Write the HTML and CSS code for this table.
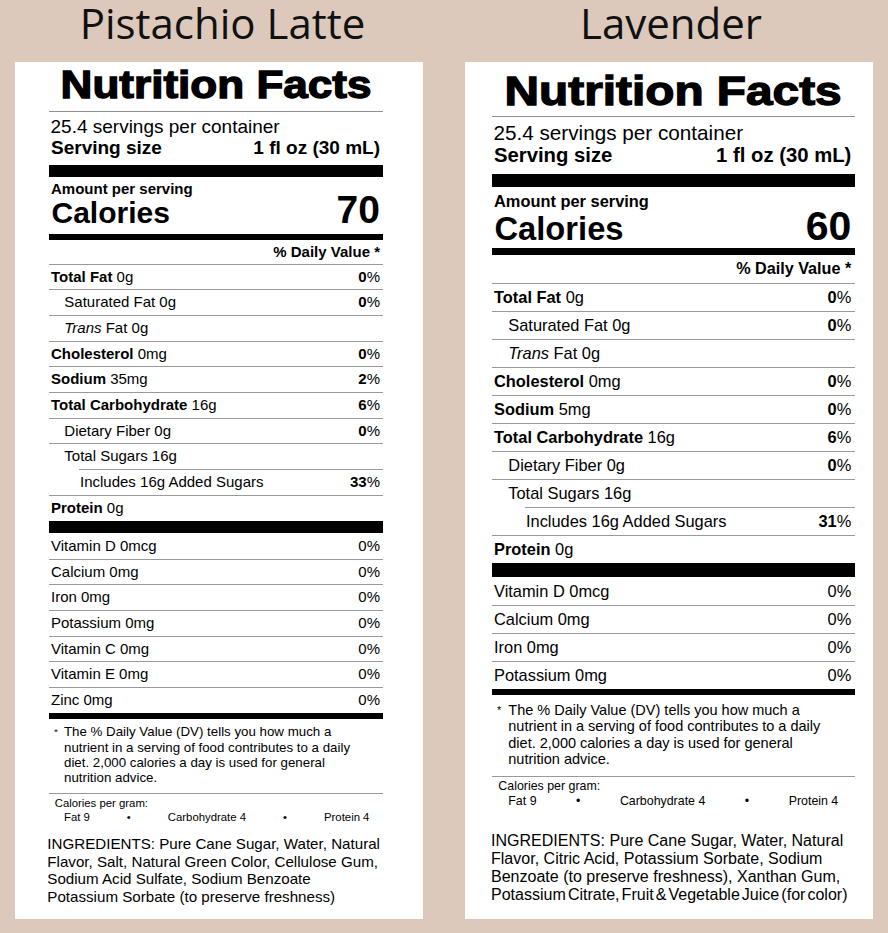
FILE: index.html
```html
<!DOCTYPE html>
<html lang="en">
<head>
<meta charset="utf-8">
<title>Nutrition Facts</title>
<link rel="stylesheet" href="styles.css">
</head>
<body>
<div class="page">
  <section class="col col-a">
    <h1 class="title title-a">Pistachio Latte</h1>
    <div class="panel">
      <div class="nf"><span>Nutrition Facts</span></div>
      <div class="servings">25.4 servings per container</div>
      <div class="ss"><b>Serving size</b><b>1 fl oz (30 mL)</b></div>
      <div class="bar bar1"></div>
      <div class="aps">Amount per serving</div>
      <div class="cal"><span class="calword">Calories</span><span class="calnum">70</span></div>
      <div class="bar bar2"></div>
      <div class="dvh">% Daily Value *</div>
      <div class="rows">
        <div class="row"><span><b>Total Fat</b> 0g</span><span><b>0</b>%</span></div>
        <div class="row"><span class="sub">Saturated Fat 0g</span><span><b>0</b>%</span></div>
        <div class="row"><span class="sub"><i>Trans</i> Fat 0g</span><span></span></div>
        <div class="row"><span><b>Cholesterol</b> 0mg</span><span><b>0</b>%</span></div>
        <div class="row"><span><b>Sodium</b> 35mg</span><span><b>2</b>%</span></div>
        <div class="row"><span><b>Total Carbohydrate</b> 16g</span><span><b>6</b>%</span></div>
        <div class="row"><span class="sub">Dietary Fiber 0g</span><span><b>0</b>%</span></div>
        <div class="row"><span class="sub">Total Sugars 16g</span><span></span></div>
        <div class="row subsub"><span>Includes 16g Added Sugars</span><span><b>33</b>%</span></div>
        <div class="row"><span><b>Protein</b> 0g</span><span></span></div>
      </div>
      <div class="bar bar3"></div>
      <div class="rows vit">
        <div class="row"><span>Vitamin D 0mcg</span><span>0%</span></div>
        <div class="row"><span>Calcium 0mg</span><span>0%</span></div>
        <div class="row"><span>Iron 0mg</span><span>0%</span></div>
        <div class="row"><span>Potassium 0mg</span><span>0%</span></div>
        <div class="row"><span>Vitamin C 0mg</span><span>0%</span></div>
        <div class="row"><span>Vitamin E 0mg</span><span>0%</span></div>
        <div class="row"><span>Zinc 0mg</span><span>0%</span></div>
      </div>
      <div class="bar bar4"></div>
      <div class="note"><span class="ast">*</span><span>The % Daily Value (DV) tells you how much a<br>nutrient in a serving of food contributes to a daily<br>diet. 2,000 calories a day is used for general<br>nutrition advice.</span></div>
      <div class="rule"></div>
      <div class="cpg">
        <div>Calories per gram:</div>
        <div class="cpg-items"><span>Fat 9</span><span>•</span><span>Carbohydrate 4</span><span>•</span><span>Protein 4</span></div>
      </div>
      <p class="ingr">INGREDIENTS: Pure Cane Sugar, Water, Natural<br>Flavor, Salt, Natural Green Color, Cellulose Gum,<br>Sodium Acid Sulfate, Sodium Benzoate<br>Potassium Sorbate (to preserve freshness)</p>
    </div>
  </section>

  <section class="col col-b">
    <h1 class="title title-b">Lavender</h1>
    <div class="panel">
      <div class="nf"><span>Nutrition Facts</span></div>
      <div class="servings">25.4 servings per container</div>
      <div class="ss"><b>Serving size</b><b>1 fl oz (30 mL)</b></div>
      <div class="bar bar1"></div>
      <div class="aps">Amount per serving</div>
      <div class="cal"><span class="calword">Calories</span><span class="calnum">60</span></div>
      <div class="bar bar2"></div>
      <div class="dvh">% Daily Value *</div>
      <div class="rows">
        <div class="row"><span><b>Total Fat</b> 0g</span><span><b>0</b>%</span></div>
        <div class="row"><span class="sub">Saturated Fat 0g</span><span><b>0</b>%</span></div>
        <div class="row"><span class="sub"><i>Trans</i> Fat 0g</span><span></span></div>
        <div class="row"><span><b>Cholesterol</b> 0mg</span><span><b>0</b>%</span></div>
        <div class="row"><span><b>Sodium</b> 5mg</span><span><b>0</b>%</span></div>
        <div class="row"><span><b>Total Carbohydrate</b> 16g</span><span><b>6</b>%</span></div>
        <div class="row"><span class="sub">Dietary Fiber 0g</span><span><b>0</b>%</span></div>
        <div class="row"><span class="sub">Total Sugars 16g</span><span></span></div>
        <div class="row subsub"><span>Includes 16g Added Sugars</span><span><b>31</b>%</span></div>
        <div class="row"><span><b>Protein</b> 0g</span><span></span></div>
      </div>
      <div class="bar bar3"></div>
      <div class="rows vit">
        <div class="row"><span>Vitamin D 0mcg</span><span>0%</span></div>
        <div class="row"><span>Calcium 0mg</span><span>0%</span></div>
        <div class="row"><span>Iron 0mg</span><span>0%</span></div>
        <div class="row"><span>Potassium 0mg</span><span>0%</span></div>
      </div>
      <div class="bar bar4"></div>
      <div class="note"><span class="ast">*</span><span>The % Daily Value (DV) tells you how much a<br>nutrient in a serving of food contributes to a daily<br>diet. 2,000 calories a day is used for general<br>nutrition advice.</span></div>
      <div class="rule"></div>
      <div class="cpg">
        <div>Calories per gram:</div>
        <div class="cpg-items"><span>Fat 9</span><span>•</span><span>Carbohydrate 4</span><span>•</span><span>Protein 4</span></div>
      </div>
      <p class="ingr">INGREDIENTS: Pure Cane Sugar, Water, Natural<br>Flavor, Citric Acid, Potassium Sorbate, Sodium<br>Benzoate (to preserve freshness), Xanthan Gum,<br><span class="tight">Potassium Citrate, Fruit &amp; Vegetable Juice (for color)</span></p>
    </div>
  </section>
</div>
</body>
</html>
```
FILE: styles.css
```css
* { box-sizing: border-box; }

html, body {
  margin: 0;
  padding: 0;
}

body {
  width: 888px;
  height: 933px;
  overflow: hidden;
  background: #ddc9bb;
  color: #000;
  font-family: "Liberation Sans", Arial, sans-serif;
}

.page {
  display: flex;
  gap: 42px;
  padding: 0 15px;
}

.col {
  width: 408px;
  flex: none;
}

/* per-label scale settings */
.col-a {
  --pad-l: 34px; --pad-r: 40px;
  --nf-size: 38px; --nf-lh: 40px; --nf-sx: 1.16; --nf-pt: 2.8px; --nf-pb: 6px;
  --sv-size: 19px; --sv-lh: 21px; --sv-mt: 3.8px;
  --ss-size: 19px; --ss-lh: 21px;
  --bar1-mt: 7px; --bar1-h: 12px;
  --aps-size: 15px; --aps-lh: 17px; --aps-mt: 3.7px;
  --cal-size: 30px; --calnum-size: 39px; --cal-lh: 26px; --cal-mt: 0px;
  --bar2-mt: 7.5px; --bar2-h: 6px;
  --dv-size: 15px; --dv-lh: 17px; --dv-pt: 3px; --dv-pb: 4px;
  --row-size: 15px; --row-lh: 24.67px; --ind1: 13.3px; --ind2: 30px;
  --bar3-h: 12.5px; --bar4-h: 6px;
  --note-size: 13.3px; --note-lh: 15.2px; --note-mt: 5.6px; --note-pl: 5px; --ast-w: 10px; --note-mb: 7.7px;
  --cpg-size: 11.35px; --cpg-lh: 14px; --cpg-mt: 2.1px; --cpg-pl: 5.7px; --cpg-pl2: 9.3px; --cpg-gap: 37px;
  --ing-size: 15.15px; --ing-lh: 17.6px; --ing-mt: 11.2px; --ing-ml: -1.7px;
  --ip-l: 2px; --ip-r: 3px;
}

.col-b {
  --pad-l: 27px; --pad-r: 18px;
  --nf-size: 40px; --nf-lh: 42px; --nf-sx: 1.194; --nf-pt: 8px; --nf-pb: 4px;
  --sv-size: 20.7px; --sv-lh: 23px; --sv-mt: 4.3px;
  --ss-size: 20.3px; --ss-lh: 23px;
  --bar1-mt: 6.7px; --bar1-h: 13.3px;
  --aps-size: 16.4px; --aps-lh: 18px; --aps-mt: 4.7px;
  --cal-size: 32.7px; --calnum-size: 41px; --cal-lh: 28px; --cal-mt: 1.8px;
  --bar2-mt: 5.6px; --bar2-h: 6.7px;
  --dv-size: 16.2px; --dv-lh: 18px; --dv-pt: 4.4px; --dv-pb: 5.3px;
  --row-size: 16.4px; --row-lh: 27px; --ind1: 14.3px; --ind2: 33px;
  --bar3-h: 14px; --bar4-h: 6px;
  --note-size: 14.5px; --note-lh: 16.5px; --note-mt: 7px; --note-pl: 5px; --ast-w: 11.3px; --note-mb: 8px;
  --cpg-size: 12.4px; --cpg-lh: 15px; --cpg-mt: 2.2px; --cpg-pl: 6.3px; --cpg-pl2: 10px; --cpg-gap: 39.5px;
  --ing-size: 16.05px; --ing-lh: 18px; --ing-mt: 22.5px; --ing-ml: -1px;
  --ip-l: 2px; --ip-r: 3.7px;
}

.title {
  margin: 0;
  padding-bottom: 16px;
  font-family: "Open Sans", "Noto Sans", sans-serif;
  font-weight: 400;
  font-size: 42px;
  line-height: 46px;
  text-align: center;
  color: #111;
}

.title-a { padding-left: 7px; }
.title-b { padding-left: 4px; }

.panel {
  height: 857px;
  background: #fff;
  padding: 0 var(--pad-r) 0 var(--pad-l);
}

.nf {
  padding: var(--nf-pt) 0 var(--nf-pb);
  border-bottom: 1px solid #8f8f8f;
  text-align: center;
  font-weight: 700;
  font-size: var(--nf-size);
  line-height: var(--nf-lh);
  white-space: nowrap;
}

.nf span {
  display: inline-block;
  transform: scaleX(var(--nf-sx));
  -webkit-text-stroke: 1.3px #000;
}

.servings {
  margin-top: var(--sv-mt);
  padding-left: 1.5px;
  font-size: var(--sv-size);
  line-height: var(--sv-lh);
  white-space: nowrap;
}

.ss {
  display: flex;
  justify-content: space-between;
  padding: 0 var(--ip-r) 0 var(--ip-l);
  font-size: var(--ss-size);
  line-height: var(--ss-lh);
  white-space: nowrap;
}

.bar { background: #000; }
.bar1 { margin-top: var(--bar1-mt); height: var(--bar1-h); }
.bar2 { margin-top: var(--bar2-mt); height: var(--bar2-h); }
.bar3 { height: var(--bar3-h); }
.bar4 { height: var(--bar4-h); }

.aps {
  margin-top: var(--aps-mt);
  padding-left: var(--ip-l);
  font-weight: 700;
  font-size: var(--aps-size);
  line-height: var(--aps-lh);
  white-space: nowrap;
}

.cal {
  display: flex;
  justify-content: space-between;
  align-items: baseline;
  margin-top: var(--cal-mt);
  padding: 0 var(--ip-r) 0 2.5px;
  font-weight: 700;
  line-height: var(--cal-lh);
}

.calword { font-size: var(--cal-size); }
.calnum { font-size: var(--calnum-size); }

.dvh {
  padding: var(--dv-pt) var(--ip-r) var(--dv-pb) 0;
  text-align: right;
  font-weight: 700;
  font-size: var(--dv-size);
  line-height: var(--dv-lh);
}

.row {
  display: flex;
  justify-content: space-between;
  border-top: 1px solid #999;
  padding: 0 var(--ip-r) 0 var(--ip-l);
  font-size: var(--row-size);
  line-height: var(--row-lh);
  white-space: nowrap;
}

.vit .row:first-child {
  border-top: 0;
  padding-top: 1px;
}

.row .sub { padding-left: var(--ind1); }

.row.subsub {
  margin-left: var(--ind2);
  padding-left: 1px;
}

.note {
  display: flex;
  margin-top: var(--note-mt);
  margin-bottom: var(--note-mb);
  padding-left: var(--note-pl);
  font-size: var(--note-size);
  line-height: var(--note-lh);
  white-space: nowrap;
}

.ast {
  flex: none;
  width: var(--ast-w);
  font-size: 0.75em;
}

.rule {
  height: 1px;
  background: #999;
}

.cpg {
  margin-top: var(--cpg-mt);
  padding-left: var(--cpg-pl);
  font-size: var(--cpg-size);
  line-height: var(--cpg-lh);
  white-space: nowrap;
}

.cpg-items {
  display: flex;
  gap: var(--cpg-gap);
  padding-left: var(--cpg-pl2);
}

.ingr {
  margin: var(--ing-mt) 0 0 var(--ing-ml);
  font-size: var(--ing-size);
  line-height: var(--ing-lh);
  white-space: nowrap;
}

.tight { word-spacing: -2.4px; }
```
